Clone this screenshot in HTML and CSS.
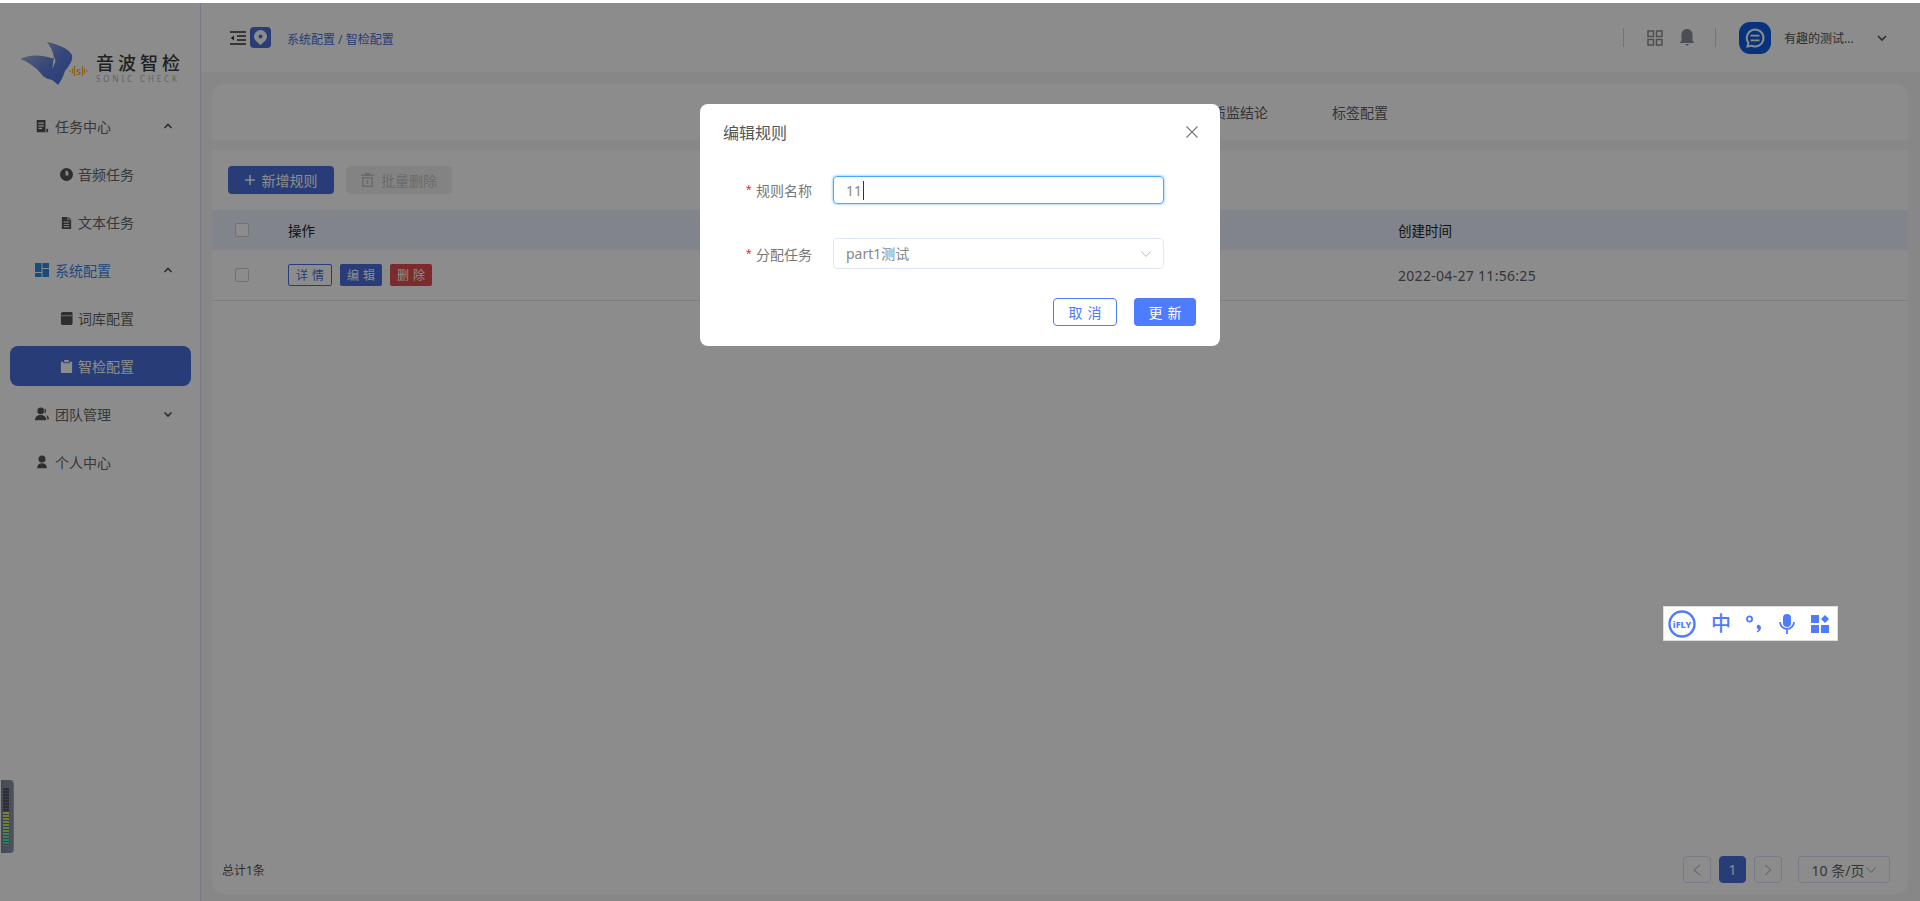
FILE: index.html
```html
<!DOCTYPE html>
<html lang="zh-CN">
<head>
<meta charset="utf-8">
<title>智检配置</title>
<link rel="stylesheet" href="styles.css">
</head>
<body>
<div class="app">
  <aside class="sidebar">
    <div class="logo">
      <svg class="logo-mark" width="68" height="50" viewBox="0 0 68 50">
        <defs><linearGradient id="wing" x1="0" y1="0" x2="1" y2="1"><stop offset="0" stop-color="#b9c3e0"/><stop offset="0.55" stop-color="#5f80dc"/><stop offset="1" stop-color="#4a6fdb"/></linearGradient></defs>
        <path fill="url(#wing)" d="M0.500 23 C8 19 20 18 33 22.500 L34 21 C33 15 30 10 27 6 C37 8 48 12 52 19 C53 24 50 29 45 35 C43 41 41 45 38 49 C36 47 34 45 32 44 C28 43 25 42 23 40 C18 33 10 27 0.500 23 Z"/>
        <path fill="#fff" d="M34.500 21 L35.500 25 L32.500 33 L33 26 Z"/>
        <g stroke="#f0b040" stroke-width="1.200" fill="none"><path d="M49 35h2M52.500 32.500v5M54.500 30v10M62.500 30v10M64.500 32.500v5M66 35h2"/></g>
        <text x="58.500" y="39" text-anchor="middle" class="logo-s">S</text>
      </svg>
      <div class="logo-text">
        <div class="logo-cn">音波智检</div>
        <div class="logo-en">SONIC CHECK</div>
      </div>
    </div>
    <nav class="menu">
      <div class="item"><svg class="ico" viewBox="0 0 16 16"><path fill="currentColor" d="M2 1h10v14H2zM4 4v1.500h6V4zM4 7v1.500h6V7zM4 10v1.500h4V10zM13 11h2v4h-2z" fill-rule="evenodd"/></svg><span>任务中心</span><svg class="chev" viewBox="0 0 10 6"><path d="M1.500 5L5 1.500 8.500 5"/></svg></div>
      <div class="item sub"><svg class="ico-s" viewBox="0 0 14 14"><path fill="currentColor" fill-rule="evenodd" d="M7 0a7 7 0 1 1 0 14A7 7 0 0 1 7 0zM6 3v5h3V4.500L8 3.500V3z"/></svg><span>音频任务</span></div>
      <div class="item sub"><svg class="ico-s" viewBox="0 0 14 14"><path fill="currentColor" fill-rule="evenodd" d="M2 1h6l0 3h4v10H2zM9 1l3 2.500H9zM4 6v1h6V6zM4 8.500v1h6v-1zM4 11v1h6v-1z"/></svg><span>文本任务</span></div>
      <div class="item open"><svg class="ico" viewBox="0 0 14 14"><path fill="currentColor" d="M0 0h6.500v9H0zM7.500 0H14v5H7.500zM7.500 6H14v8H7.500zM0 10h6.500v4H0z"/></svg><span>系统配置</span><svg class="chev" viewBox="0 0 10 6"><path d="M1.500 5L5 1.500 8.500 5"/></svg></div>
      <div class="item sub"><svg class="ico-s" viewBox="0 0 14 14"><path fill="currentColor" d="M3 0h9a1.500 1.500 0 0 1 1.500 1.500V12.500A1.500 1.500 0 0 1 12 14H3a2 2 0 0 1-2-2V2a2 2 0 0 1 2-2z"/><path fill="#c9c9c9" d="M1.500 3.500h12v1h-12z"/></svg><span>词库配置</span></div>
      <div class="item sub active"><svg class="ico-s" viewBox="0 0 14 14"><path fill="currentColor" d="M1 2h2.500v1.500h7V2H13v12H1zM4.500 0h5v2.500h-5z"/></svg><span>智检配置</span></div>
      <div class="item"><svg class="ico" viewBox="0 0 16 16"><circle cx="6.500" cy="4.500" r="3.800" fill="currentColor"/><path fill="currentColor" d="M0 15c0-4 3-6 6.500-6s6.500 2 6.500 6zM11 1.500a3.500 3.500 0 0 1 0 6zM13 9c2 1 3 3 3 5h-2c0-2-.5-3.500-1-5z"/></svg><span>团队管理</span><svg class="chev" viewBox="0 0 10 6"><path d="M1.500 1.500L5 5 8.500 1.500"/></svg></div>
      <div class="item"><svg class="ico" viewBox="0 0 16 16"><circle cx="8" cy="4.500" r="4" fill="currentColor"/><path fill="currentColor" d="M2.500 15c0-3.500 2-5.500 5.500-5.500s5.500 2 5.500 5.500z"/></svg><span>个人中心</span></div>
    </nav>
  </aside>
  <main class="main">
    <header class="topbar">
      <svg class="fold" width="16" height="14" viewBox="0 0 16 14"><path d="M0 1h16M7 5h9M7 9h9M0 13h16" stroke="currentColor" stroke-width="1.300" fill="none"/><path d="M4 4.500v5L0.800 7z" fill="currentColor"/></svg>
      <div class="badge"><svg width="13" height="15" viewBox="0 0 13 15"><path fill="#fff" fill-rule="evenodd" d="M6.500 0a6.500 6.500 0 0 1 6.500 6.500C13 10 9 13 6.500 15 4 13 0 10 0 6.500A6.500 6.500 0 0 1 6.500 0zm0 4.500a2 2 0 1 0 0 4 2 2 0 0 0 0-4z"/></svg></div>
      <div class="crumb">系统配置 / 智检配置</div>
      <div class="top-right">
        <i class="vline"></i>
        <svg class="grid-ico" width="16" height="16" viewBox="0 0 16 16"><path fill="none" stroke="currentColor" stroke-width="1.500" d="M1 1h5.500v5.500H1zM9.500 1H15v5.500H9.500zM1 9.500h5.500V15H1zM9.500 9.500H15V15H9.500z"/></svg>
        <svg class="bell" width="14" height="17" viewBox="0 0 14 17"><path fill="currentColor" d="M7 0c3.500 0 5.500 2.500 5.500 6v5l1.500 3H0l1.500-3V6C1.500 2.500 3.500 0 7 0zM5 15h4l-2 2z"/></svg>
        <i class="vline second"></i>
        <div class="avatar"><svg width="24" height="24" viewBox="0 0 24 24"><path fill="none" stroke="#fff" stroke-width="2" d="M12 3.500a8.500 8.500 0 1 1-3.600 16.200L4.500 20.500l.9-3.600A8.500 8.500 0 0 1 12 3.500z"/><path stroke="#fff" stroke-width="1.800" d="M7.500 9.700h9M7.500 14.300h9"/></svg></div>
        <div class="uname">有趣的测试...</div>
        <svg class="chev user-chev" viewBox="0 0 10 6"><path d="M1 1l4 4 4-4"/></svg>
      </div>
    </header>
    <div class="content">
      <section class="tabs">
        <span class="tab">质监结论</span>
        <span class="tab">标签配置</span>
      </section>
      <section class="card">
        <div class="toolbar">
          <button class="btn primary"><svg width="10" height="10" viewBox="0 0 10 10"><path d="M5 0v10M0 5h10" stroke="currentColor" stroke-width="1.500"/></svg>新增规则</button>
          <button class="btn disabled"><svg width="13" height="14" viewBox="0 0 13 14"><path fill="currentColor" fill-rule="evenodd" d="M4 0h5v1.500h4V3H0V1.500h4zM1 4h11v10H1zM2.500 5.500v7h8v-7zM5.800 7h1.500v4H5.800z"/></svg>批量删除</button>
        </div>
        <div class="row head">
          <div class="cell-check"><i class="check"></i></div>
          <div>操作</div>
          <div>创建时间</div>
        </div>
        <div class="row body">
          <div class="cell-check"><i class="check"></i></div>
          <div class="ops"><span class="op outline">详情</span><span class="op fill">编辑</span><span class="op danger">删除</span></div>
          <div>2022-04-27 11:56:25</div>
        </div>
        <footer class="foot">
          <span class="total">总计1条</span>
          <div class="pager">
            <span class="pg"><svg width="8" height="12" viewBox="0 0 8 12"><path d="M7 1L1 6l6 5" fill="none" stroke="currentColor"/></svg></span>
            <span class="pg cur">1</span>
            <span class="pg"><svg width="8" height="12" viewBox="0 0 8 12"><path d="M1 1l6 5-6 5" fill="none" stroke="currentColor"/></svg></span>
            <span class="size">10 条/页<svg width="10" height="6" viewBox="0 0 10 6"><path d="M0.500 0.500L5 5.500l4.500-5" fill="none" stroke="currentColor"/></svg></span>
          </div>
        </footer>
      </section>
    </div>
  </main>
</div>

<div class="audio-widget"><i class="led"></i></div>

<div class="overlay"></div>

<div class="ifly">
  <svg class="if-logo" width="28" height="28" viewBox="0 0 28 28"><circle cx="14" cy="14" r="12.500" fill="none" stroke="#4f7bff" stroke-width="2.400"/><text x="14" y="17.500" text-anchor="middle" class="ifly-t">iFLY</text></svg>
  <span class="ifly-zh">中</span>
  <svg class="if-punct" width="16" height="18" viewBox="0 0 16 18"><circle cx="3.500" cy="4" r="2.600" fill="none" stroke="#4f7bff" stroke-width="1.800"/><path fill="#4f7bff" d="M11.500 10a2.700 2.700 0 0 1 3.500 2.500c0 2-1.500 4-3.500 5l-.8-1c1-.7 1.600-1.300 1.800-2a2.700 2.700 0 0 1-1-4.500z"/></svg>
  <svg class="if-mic" width="16" height="20" viewBox="0 0 16 20"><rect x="4" y="0" width="8" height="13" rx="4" fill="#4f7bff"/><path d="M1 8a7 7 0 0 0 14 0M8 15v5" fill="none" stroke="#4f7bff" stroke-width="1.800"/></svg>
  <svg class="if-apps" width="18" height="18" viewBox="0 0 18 18"><path fill="#4f7bff" d="M0 0h8v8H0zM0 10h8v8H0zM10 10h8v8h-8zM14 0l4 4-4 4-4-4z"/></svg>
</div>

<div class="modal">
  <div class="modal-head"><span class="modal-title">编辑规则</span><svg class="close" width="12" height="12" viewBox="0 0 12 12"><path d="M0.500 0.500l11 11M11.500 0.500l-11 11" stroke="currentColor" stroke-width="1.100"/></svg></div>
  <div class="field first"><label class="label"><b>*</b>规则名称</label><div class="input focus">11<i class="caret"></i></div></div>
  <div class="field"><label class="label"><b>*</b>分配任务</label><div class="input select"><span class="select-val">part1测试</span><svg width="10" height="6" viewBox="0 0 10 6"><path d="M0.500 0.500L5 5.500l4.500-5" fill="none" stroke="currentColor"/></svg></div></div>
  <div class="modal-foot"><button class="mbtn ghost">取消</button><button class="mbtn solid">更新</button></div>
</div>
</body>
</html>
```
FILE: styles.css
```css
* { box-sizing: border-box; }
html, body { margin: 0; padding: 0; height: 100%; overflow: hidden; }
body {
  position: relative;
  border-top: 3px solid #fff;
  background: #fff;
  font-family: "Noto Sans", "Noto Sans CJK SC", sans-serif;
  font-size: 14px;
  color: #606266;
}
button { font-family: inherit; border: 0; padding: 0; }
i { display: block; font-style: normal; }

.app { display: flex; height: 898px; background: #f6f6f8; }

/* sidebar */
.sidebar { width: 201px; flex: none; background: #fff; border-right: 1px solid #dbe1f6; }
.logo { height: 99px; padding: 33px 0 0 20px; display: flex; align-items: flex-start; }
.logo-mark { flex: none; }
.logo-s { font: 700 9px "Noto Sans", sans-serif; fill: #f0b040; }
.logo-text { margin-left: 8px; margin-top: 16px; width: 90px; }
.logo-cn { font-size: 18px; line-height: 22px; font-weight: 500; letter-spacing: 4px; color: #3c3c3c; white-space: nowrap; }
.logo-en { font-size: 8px; line-height: 10px; letter-spacing: 2.900px; color: #b5b5b5; white-space: nowrap; }
.menu { display: flex; flex-direction: column; }
.item {
  height: 40px; margin: 4px 9px 4px 10px; padding-left: 25px;
  display: flex; align-items: center; border-radius: 8px; color: #666;
}
.item .ico { width: 14px; height: 14px; margin-right: 6px; flex: none; color: #555; }
.item .ico-s { width: 13px; height: 13px; margin-right: 5px; flex: none; color: #555; }
.item.sub { padding-left: 50px; }
.item.open { color: #3a86e8; }
.item.open .ico { color: #2a8ae8; }
.item.active { background: #4a6fdb; color: #fff; }
.item.active .ico-s { color: #fff; }
.chev { width: 10px; height: 6px; fill: none; stroke: #555; stroke-width: 1.700; }
.item .chev { margin-left: auto; margin-right: 18px; }

/* main */
.main { flex: 1; min-width: 0; display: flex; flex-direction: column; }
.topbar { height: 69px; flex: none; background: #fff; display: flex; align-items: center; padding-left: 29px; }
.fold { color: #333; margin-right: 4px; }
.badge { width: 21px; height: 21px; border-radius: 4px; background: #4a6fdb; display: flex; align-items: center; justify-content: center; margin-right: 16px; }
.crumb { font-size: 12px; color: #4a6fdb; margin-top: 3px; }
.top-right { margin-left: auto; display: flex; align-items: center; padding-right: 33px; }
.vline { width: 1px; height: 19px; background: #d4d4d4; margin-right: 23px; }
.vline.second { margin: 0 23px 0 21px; }
.grid-ico { color: #8f8f8f; margin-right: 17px; }
.bell { color: #8c8f99; }
.avatar { width: 32px; height: 32px; border-radius: 11px; background: #0f5ce0; display: flex; align-items: center; justify-content: center; margin-right: 13px; }
.uname { font-size: 12px; color: #555; width: 93px; white-space: nowrap; }
.user-chev { margin: 0; }

.content { flex: 1; min-height: 0; display: flex; flex-direction: column; gap: 10px; padding: 12px 12px 7px 11px; }
.tabs { height: 56px; flex: none; background: #fff; border-radius: 12px 12px 0 0; display: flex; justify-content: flex-end; align-items: center; gap: 64px; padding-right: 520px; }
.card { flex: 1; min-height: 0; background: #fff; border-radius: 0 0 12px 12px; display: flex; flex-direction: column; }
.toolbar { padding: 16px 0 16px 16px; display: flex; gap: 12px; }
.btn { height: 28px; width: 106px; border-radius: 4px; font-size: 14px; display: flex; align-items: center; justify-content: center; gap: 7px; }
.btn.primary { background: #4a6fdb; color: #fff; }
.btn.disabled { background: #efefef; color: #c4c4c4; }

.row { display: grid; grid-template-columns: 76px 1110px 1fr; align-items: center; }
.row.head { height: 40px; background: #edf0fe; color: #222; font-size: 13.500px; }
.row.body { height: 51px; border-bottom: 1px solid #e3e3e3; letter-spacing: .3px; }
.cell-check { padding-left: 23px; }
.check { width: 14px; height: 14px; border: 1px solid #cfcfcf; border-radius: 2px; background: #fff; }
.ops { display: flex; gap: 8px; }
.op { height: 22px; font-size: 12px; letter-spacing: 4px; display: flex; align-items: center; border-radius: 2px; padding: 0 3px 0 7px; }
.op.outline { border: 1px solid #4a6fdb; color: #4a6fdb; width: 44px; }
.op.fill { background: #4a6fdb; color: #fff; }
.op.danger { background: #e04f52; color: #fff; }

.foot { margin-top: auto; padding: 0 18px 11px 10px; display: flex; align-items: center; justify-content: space-between; }
.total { font-size: 12px; color: #555; }
.pager { display: flex; align-items: center; }
.pg { width: 28px; height: 27px; border: 1px solid #dbe1f6; border-radius: 4px; display: flex; align-items: center; justify-content: center; color: #aaa; margin-right: 8px; }
.pg.cur { width: 27px; background: #4a6fdb; border-color: #4a6fdb; color: #fff; }
.size { width: 92px; height: 27px; margin-left: 8px; border: 1px solid #dbe1f6; border-radius: 4px; display: flex; align-items: center; justify-content: center; gap: 2px; color: #666; }
.size svg { color: #aaa; }

/* floating */
.audio-widget { position: absolute; left: 1px; top: 777px; width: 13px; height: 73px; border-radius: 0 4px 4px 0; background: linear-gradient(90deg, #7c869e, #8f95aa); border-right: 1px solid #a8aec0; padding: 8px 0 7px 2px; }
.led { width: 6px; height: 100%; background:
  repeating-linear-gradient(180deg, transparent 0 2px, #6d7488 2px 3px),
  linear-gradient(180deg, #50545f 0 40%, #f7e55c 40%, #aef07a 68%, #35e6c8 100%); }
.overlay { position: absolute; inset: 0; background: rgba(0,0,0,.45); }
.ifly { position: absolute; left: 1663px; top: 603px; width: 175px; height: 35px; background: #fff; border: 1px solid #dcdcdc; display: flex; align-items: center; padding-left: 4px; }
.ifly-t { font: 800 9px "Noto Sans", sans-serif; fill: #4f7bff; }
.ifly-zh { color: #4f7bff; font-size: 20px; line-height: 1; font-weight: 500; margin-left: 15px; }
.if-punct { margin-left: 15px; }
.if-mic { margin-left: 17px; }
.if-apps { margin-left: 16px; }

.modal { position: absolute; left: 700px; top: 101px; width: 520px; height: 242px; background: #fff; border-radius: 8px; padding: 0 24px 0 23px; }
.modal-head { height: 56px; display: flex; align-items: center; justify-content: space-between; }
.modal-title { font-size: 16px; color: #555; }
.close { color: #777; margin-right: -2px; }
.field { display: flex; align-items: center; height: 31px; margin-top: 34px; padding-left: 23px; }
.field.first { height: 28px; margin-top: 16px; }
.label { width: 87px; font-size: 14px; color: #777; display: flex; align-items: center; flex: none; }
.label b { color: #f5222d; font-weight: 400; width: 10px; font-family: "Liberation Sans", sans-serif; }
.input { width: 331px; flex: none; height: 100%; border: 1px solid #dfe6fb; border-radius: 4px; padding-left: 12px; font-size: 14px; color: #888; display: flex; align-items: center; }
.input.focus { border-color: #4aa8ff; box-shadow: 0 0 2px 1px #b5dcff; }
.caret { width: 1px; height: 19px; background: #333; margin-left: 1px; }
.select { justify-content: space-between; padding-right: 12px; }
.select-val { margin-bottom: 2px; }
.select svg { color: #bbb; }
.modal-foot { display: flex; justify-content: flex-end; gap: 17px; margin-top: 29px; }
.mbtn { width: 62px; height: 28px; border-radius: 4px; font-size: 14px; letter-spacing: 5px; text-indent: 5px; }
.mbtn.ghost { background: #fff; border: 1px solid #4f7bff; color: #4f7bff; width: 64px; }
.mbtn.solid { background: #4f7bff; color: #fff; }
```
